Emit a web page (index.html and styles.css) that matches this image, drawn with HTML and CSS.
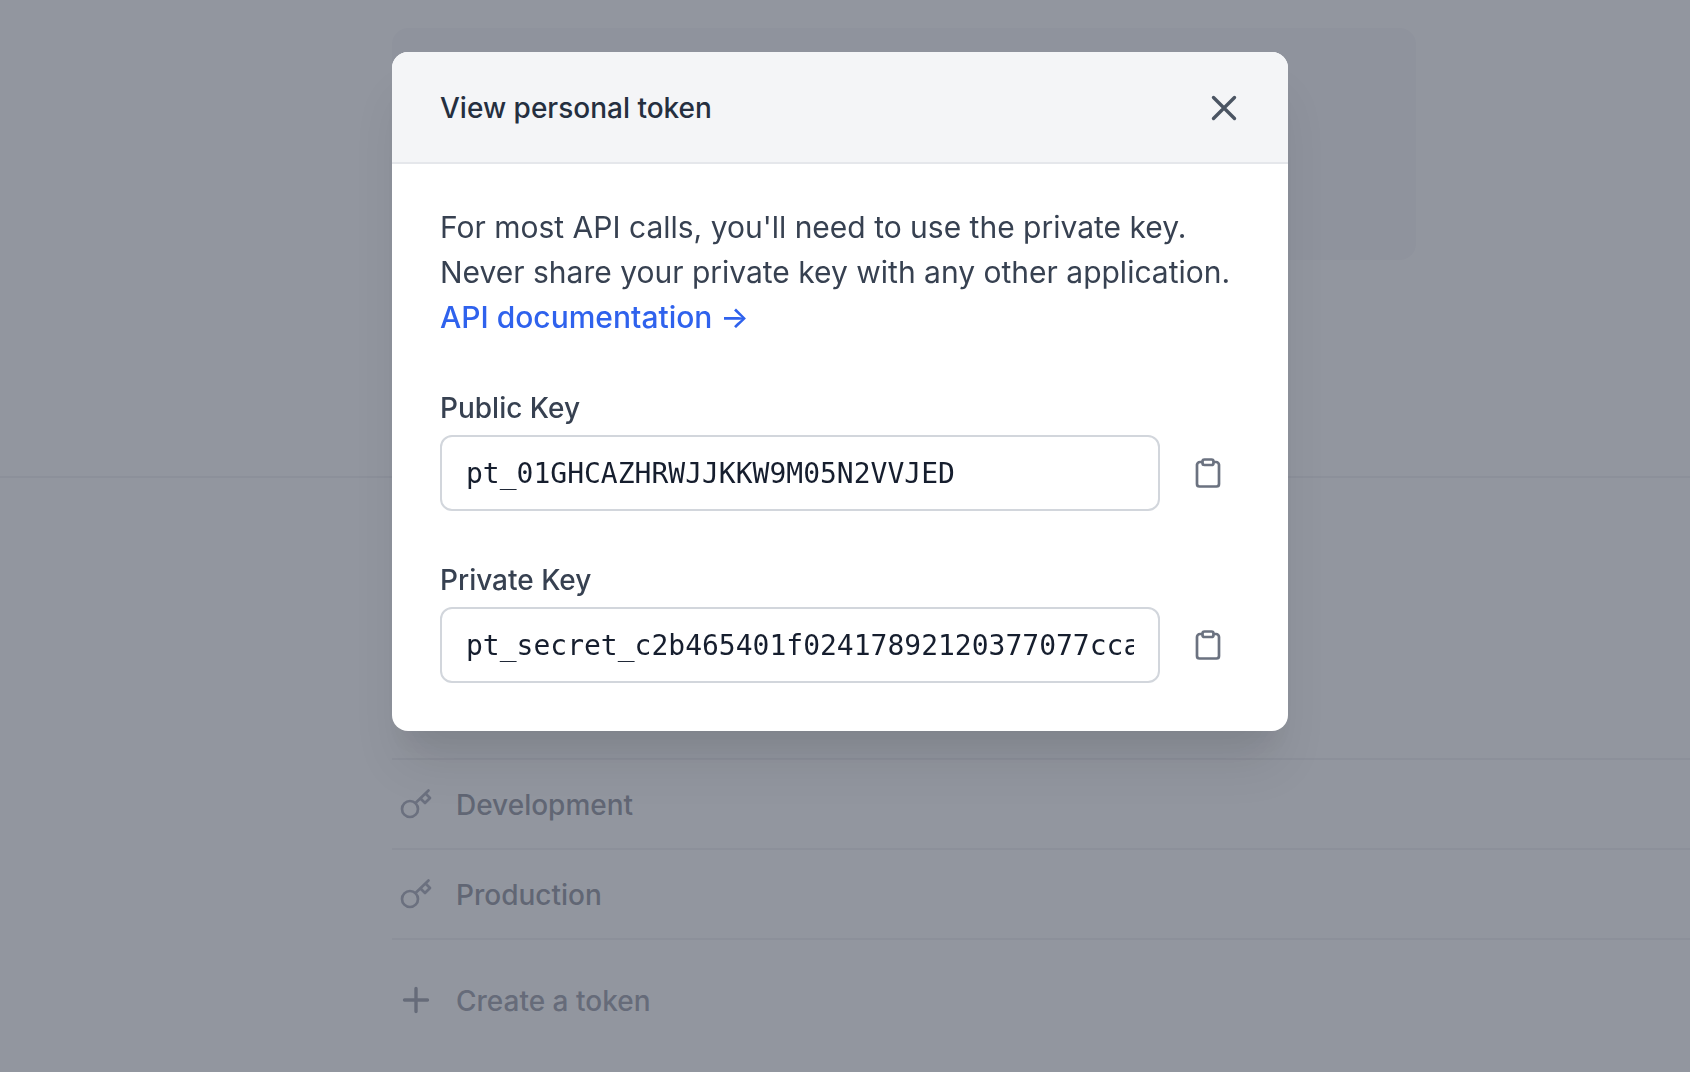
FILE: index.html
```html
<!DOCTYPE html>
<html lang="en">

<head>
	<meta charset="utf-8">
	<title>View personal token</title>
	<link rel="stylesheet" href="styles.css">
</head>

<body>
	<svg class="sprite" width="0" height="0" aria-hidden="true">
		<symbol id="clipboard" viewBox="0 0 36 36">
			<path d="M12 7 H10 A3 3 0 0 0 7 10 V29 A2.5 2.5 0 0 0 9.5 31.5 H26.5 A2.5 2.5 0 0 0 29 29 V10 A3 3 0 0 0 26 7 H24" />
			<rect x="12.5" y="4.5" width="11" height="5.5" rx="2" />
		</symbol>
		<symbol id="key" viewBox="0 0 36 36">
			<circle cx="12" cy="23" r="8" />
			<path d="M17.5 17 L30.5 4.5 M22.5 12.5 L27 17 L32 12 L28 8" />
		</symbol>
	</svg>

	<main class="page">
		<div class="notice"></div>
		<section class="tokens">
			<ul class="token-list">
				<li class="token">
					<svg class="icon"><use href="#key" /></svg>
					<span>Development</span>
				</li>
				<li class="token">
					<svg class="icon"><use href="#key" /></svg>
					<span>Production</span>
				</li>
			</ul>
			<button class="create" type="button">
				<svg class="icon icon-plus" viewBox="0 0 36 36"><path d="M18 6.5 V29.5 M6.5 18 H29.5" /></svg>
				<span>Create a token</span>
			</button>
		</section>
	</main>

	<div class="overlay">
		<div class="modal" role="dialog" aria-labelledby="modal-title">
			<header class="modal-header">
				<h1 class="modal-title" id="modal-title">View personal token</h1>
				<button class="icon-button" type="button" aria-label="Close">
					<svg class="icon icon-close" viewBox="0 0 36 36"><path d="M7.5 7.5 L28.5 28.5 M28.5 7.5 L7.5 28.5" /></svg>
				</button>
			</header>
			<div class="modal-body">
				<p class="intro">For most API calls, you'll need to use the private key. Never share your private key with any other application. <a class="docs" href="#">API documentation →</a></p>
				<div class="field">
					<label for="public-key">Public Key</label>
					<div class="field-row">
						<input id="public-key" type="text" value="pt_01GHCAZHRWJJKKW9M05N2VVJED" readonly>
						<button class="copy" type="button" aria-label="Copy public key">
							<svg class="icon"><use href="#clipboard" /></svg>
						</button>
					</div>
				</div>
				<div class="field">
					<label for="private-key">Private Key</label>
					<div class="field-row">
						<input id="private-key" type="text" value="pt_secret_c2b465401f02417892120377077cca" readonly>
						<button class="copy" type="button" aria-label="Copy private key">
							<svg class="icon"><use href="#clipboard" /></svg>
						</button>
					</div>
				</div>
			</div>
		</div>
	</div>
</body>

</html>
```
FILE: styles.css
```css
* {
	box-sizing: border-box;
}

body {
	margin: 0;
	font-family: Inter, "Liberation Sans", sans-serif;
	font-size: 28px;
	line-height: 40px;
	color: #374151;
	background-color: white;
}

button {
	padding: 0;
	border: 0;
	background: none;
	font: inherit;
	cursor: pointer;
}

.sprite {
	position: absolute;
}

.icon {
	display: block;
	flex: none;
	width: 36px;
	height: 36px;
	fill: none;
	stroke: currentColor;
	stroke-width: 2.7;
	stroke-linecap: round;
	stroke-linejoin: round;
}

/* page behind the modal */
.page {
	min-height: 100vh;
	padding-top: 28px;
}

.notice {
	width: 1024px;
	height: 232px;
	margin-left: 392px;
	border-radius: 16px;
	background-color: #f9f9fb;
}

.tokens {
	margin-top: 216px;
	padding: 280px 0 0 392px;
	border-top: 2px solid #f2f3f5;
}

.token-list {
	margin: 0;
	padding: 0;
	list-style: none;
	border-top: 2px solid #f2f3f5;
}

.token,
.create {
	display: flex;
	align-items: center;
	gap: 22px;
	padding-left: 6px;
	font-weight: 500;
}

.token {
	height: 90px;
	border-bottom: 2px solid #f2f3f5;
	color: #9c9fa9;
}

.token span,
.create span {
	padding-top: 2px;
}

.token .icon {
	color: #b0b3be;
}

.create {
	margin-top: 39px;
	color: #a6a9b3;
}

.icon-plus,
.icon-close {
	stroke-width: 3.4;
}

/* modal */
.overlay {
	position: fixed;
	inset: 0;
	display: flex;
	align-items: flex-start;
	justify-content: center;
	padding: 52px 10px 0 0;
	background-color: rgba(37, 45, 64, 0.5);
}

.modal {
	width: 896px;
	border-radius: 16px;
	overflow: hidden;
	background-color: white;
	box-shadow: 0 40px 50px -10px rgba(0, 0, 0, 0.1), 0 20px 20px -10px rgba(0, 0, 0, 0.04);
}

.modal-header {
	display: flex;
	align-items: center;
	justify-content: space-between;
	padding: 36px 46px 34px 48px;
	border-bottom: 2px solid #e5e7eb;
	background-color: #f4f5f7;
}

.modal-title {
	margin: 0;
	font-size: 28px;
	font-weight: 500;
	color: #252f3f;
}

.icon-close {
	color: #4b5563;
}

.modal-body {
	padding: 41px 48px 48px;
}

.intro {
	margin: 0 0 47px;
	font-size: 30px;
	line-height: 45px;
}

.docs {
	display: block;
	font-weight: 500;
	color: #2f62ed;
	text-decoration: none;
}

.field + .field {
	margin-top: 48px;
}

.field label {
	display: block;
	margin-bottom: 6px;
	line-height: 42px;
	font-weight: 500;
}

.field-row {
	display: flex;
	align-items: center;
	gap: 16px;
}

.field input {
	flex: 1;
	min-width: 0;
	height: 76px;
	padding: 0 24px;
	border: 2px solid #d2d6dc;
	border-radius: 12px;
	background-color: white;
	font-family: "DejaVu Sans Mono", monospace;
	font-size: 28px;
	color: #161e2e;
}

.copy {
	display: flex;
	align-items: center;
	justify-content: center;
	width: 64px;
	height: 64px;
	color: #6b7280;
}
```
